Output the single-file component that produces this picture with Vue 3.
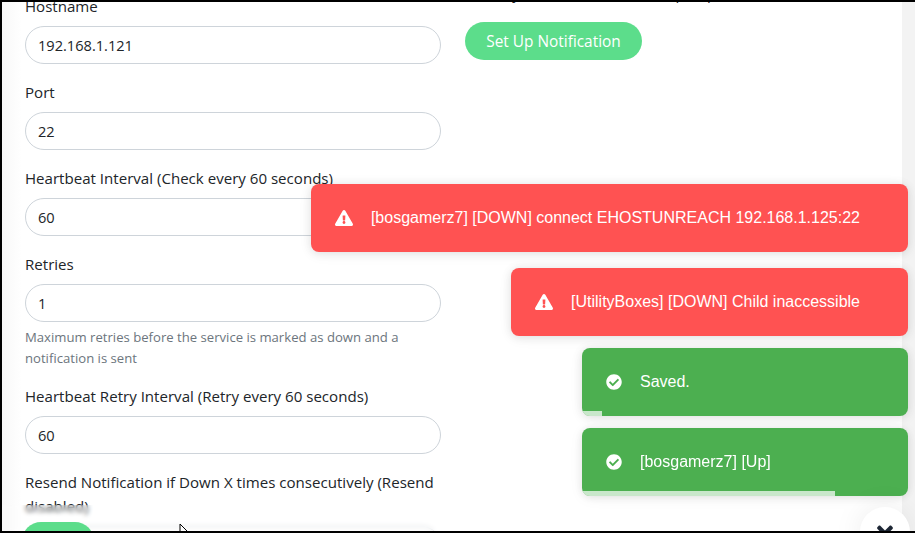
<script setup>
const fields = [
  { label: 'Hostname', value: '192.168.1.121' },
  { label: 'Port', value: '22' },
  { label: 'Heartbeat Interval (Check every 60 seconds)', value: '60' },
  { label: 'Retries', value: '1', help: 'Maximum retries before the service is marked as down and a notification is sent' },
  { label: 'Heartbeat Retry Interval (Retry every 60 seconds)', value: '60' },
  { label: 'Resend Notification if Down X times consecutively (Resend disabled)', value: '0' }
]
const warn = 'M569.517 440.013C587.975 472.007 564.806 512 527.94 512H48.054c-36.937 0-59.999-40.055-41.577-71.987L246.423 23.985c18.467-32.009 64.72-31.951 83.154 0l239.94 416.028zM288 354c-25.405 0-46 20.595-46 46s20.595 46 46 46 46-20.595 46-46-20.595-46-46-46zm-43.673-165.346l7.418 136c.347 6.364 5.609 11.346 11.982 11.346h48.546c6.373 0 11.635-4.982 11.982-11.346l7.418-136c.35-6.884-5.109-12.654-11.982-12.654h-63.383c-6.884 0-12.326 5.78-11.981 12.654z'
const ok = 'M504 256c0 136.967-111.033 248-248 248S8 392.967 8 256 119.033 8 256 8s248 111.033 248 248zM227.314 387.314l184-184c6.248-6.248 6.248-16.379 0-22.627l-22.627-22.627c-6.248-6.249-16.379-6.249-22.628 0L216 308.118l-70.059-70.059c-6.248-6.248-16.379-6.248-22.628 0l-22.627 22.627c-6.248 6.248-6.248 16.379 0 22.627l104 104c6.249 6.249 16.379 6.249 22.628.001z'
const toasts = [
  { id: 1, kind: 'err', text: '[bosgamerz7] [DOWN] connect EHOSTUNREACH 192.168.1.125:22' },
  { id: 2, kind: 'err', text: '[UtilityBoxes] [DOWN] Child inaccessible' },
  { id: 3, kind: 'good', text: 'Saved.', progress: 20 },
  { id: 4, kind: 'good', text: '[bosgamerz7] [Up]', progress: 253 }
]
</script>

<template>
  <div class="frame">
    <div class="page">
      <div class="card">
        <div class="form">
          <div v-for="f in fields" :key="f.label" class="field">
            <label class="label">{{ f.label }}</label>
            <input class="input" :value="f.value" readonly />
            <div v-if="f.help" class="help">{{ f.help }}</div>
          </div>
        </div>
        <div class="side">
          <div class="side-text">Not any notifications are set up to push.</div>
          <button class="notify">Set Up Notification</button>
        </div>
      </div>
      <div class="footer">
        <button class="save">Save</button>
      </div>
    </div>

    <div class="toasts">
      <div v-for="t in toasts" :key="t.id" class="toast" :class="t.kind">
        <svg v-if="t.kind === 'err'" class="icon warn" viewBox="0 0 576 512"><path :d="warn" fill="#fff" /></svg>
        <svg v-else class="icon ok" viewBox="0 0 512 512"><path :d="ok" fill="#fff" /></svg>
        <span>{{ t.text }}</span>
        <i v-if="t.progress" class="progress" :style="{ width: t.progress + 'px' }"></i>
      </div>
    </div>

    <div class="close">
      <svg viewBox="0 0 352 512" width="16" height="23"><path fill="#1d2634" d="M242.72 256l100.07-100.07c12.28-12.28 12.28-32.19 0-44.48l-22.24-22.24c-12.28-12.28-32.19-12.28-44.48 0L176 189.28 75.93 89.21c-12.28-12.28-32.19-12.28-44.48 0L9.21 111.45c-12.28 12.28-12.28 32.19 0 44.48L109.28 256 9.21 356.07c-12.28 12.28-12.28 32.19 0 44.48l22.24 22.24c12.28 12.28 32.2 12.28 44.48 0L176 322.72l100.07 100.07c12.28 12.28 32.2 12.28 44.48 0l22.24-22.24c12.28-12.28 12.28-32.19 0-44.48L242.72 256z"/></svg>
    </div>
    <svg class="cursor" viewBox="0 0 12 18" width="12" height="18"><path d="M1 1v14l3.5-3.2L7 17l2-1-2.4-5H11z" fill="#fff" stroke="#000" stroke-width="1"/></svg>
  </div>
</template>

<style scoped>
.frame {
  position: relative;
  width: 915px;
  height: 533px;
  box-sizing: border-box;
  overflow: hidden;
  border: solid #000;
  border-width: 2px 0 2px 2px;
  background: #f3f3f3;
  font-family: "Open Sans", "Noto Sans", sans-serif;
  color: #212529;
}
.page {
  height: 100%;
  margin: 0 13px 0 0;
  background: linear-gradient(to right, #f8f8f8, #fff 20px);
  position: relative;
  overflow: hidden;
}
.card {
  display: flex;
  padding: 0 0 0 23px;
  margin-top: -8px;
}
.form {
  width: 416px;
  flex: none;
}
.field {
  margin-bottom: 16px;
}
.label {
  display: block;
  font-size: 15.08px;
  line-height: 24px;
  margin-bottom: 8px;
}
.input {
  display: block;
  box-sizing: border-box;
  width: 416px;
  height: 38px;
  padding: 0 12px;
  border: 1px solid #ced4da;
  border-radius: 19px;
  outline: none;
  font: inherit;
  font-size: 14.6px;
  color: #212529;
  background: #fff;
}
.help {
  margin: 4.5px 0 -.5px;
  font-size: 13.13px;
  line-height: 21px;
  color: #6c757d;
}
.side {
  margin-left: 24px;
}
.side-text {
  font-size: 15.08px;
  line-height: 24px;
  height: 24px;
  margin-top: -13px;
  white-space: nowrap;
}
.notify {
  display: block;
  margin-top: 17px;
  width: 177px;
  height: 38px;
  border: 0;
  border-radius: 19px;
  background: #5cdd8b;
  color: #fff;
  font: inherit;
  font-size: 15.4px;
}
.footer {
  position: absolute;
  left: 0;
  right: 0;
  bottom: 0;
  height: 26px;
  padding: 17px 0 0 20px;
  box-sizing: border-box;
  background: rgba(255, 255, 255, .15);
  backdrop-filter: blur(2px);
}
.save {
  display: block;
  width: 72px;
  height: 38px;
  border: 0;
  border-radius: 19px;
  background: #5cdd8b;
  color: #fff;
  font: inherit;
}
.toasts {
  position: absolute;
  top: 182px;
  right: 7px;
  display: flex;
  flex-direction: column;
  align-items: flex-end;
  gap: 12px;
}
.toast {
  position: relative;
  display: flex;
  align-items: center;
  box-sizing: border-box;
  height: 68px;
  padding: 0 48px 0 24px;
  border-radius: 8px;
  overflow: hidden;
  color: #fff;
  font-family: "Liberation Sans", Arial, sans-serif;
  font-size: 16px;
  box-shadow: 0 1px 10px rgba(0, 0, 0, .1), 0 2px 15px rgba(0, 0, 0, .05);
}
.toast.err { background: #ff5252; margin-bottom: 4px; }
.toast.err + .toast.good { margin-top: -4px; }
.toast.good { background: #4caf50; width: 326px; }
.icon { flex: none; margin-right: 18px; }
.warn { width: 18px; height: 16px; }
.ok { width: 16px; height: 16px; }
.progress {
  position: absolute;
  left: 0;
  bottom: 0;
  height: 5px;
  background: rgba(255, 255, 255, .7);
}
.close {
  position: absolute;
  left: 858px;
  top: 505px;
  width: 50px;
  height: 50px;
  border-radius: 50%;
  background: #fff;
  box-shadow: 0 0 30px rgba(0, 0, 0, .08);
  display: flex;
  justify-content: center;
  padding-top: 15px;
  box-sizing: border-box;
}
.close svg { flex: none; }
.cursor {
  position: absolute;
  left: 177px;
  top: 521px;
}
</style>
